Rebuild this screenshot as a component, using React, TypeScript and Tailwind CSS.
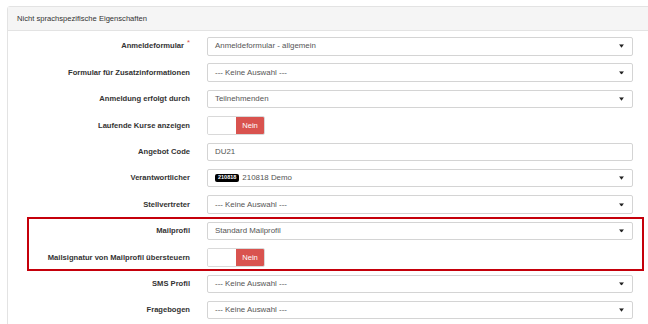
import React from "react";

const font = { fontFamily: '"Liberation Sans", Arial, sans-serif' };

function Arrow() {
  return (
    <svg width="5" height="3.5" viewBox="0 0 5 3.5" className="absolute right-[8px] top-1/2 -translate-y-1/2">
      <path d="M0 0 L5 0 L2.5 3.5 Z" fill="#222" />
    </svg>
  );
}

function Select({ children }: { children: React.ReactNode }) {
  return (
    <div className="relative flex h-full w-[426px] items-center rounded-[2px] border border-[#d4d4d4] bg-white pl-[7px] text-[7.9px] text-[#555]">
      {children}
      <Arrow />
    </div>
  );
}

function Input({ value }: { value: string }) {
  return (
    <div className="flex h-full w-[426px] items-center rounded-[2px] border border-[#d4d4d4] bg-white pl-[7px] text-[7.9px] text-[#555]">
      {value}
    </div>
  );
}

function Toggle() {
  return (
    <div className="flex h-full w-[58px] overflow-hidden rounded-[2px] border border-[#d9d9d9]">
      <div className="w-[28px] bg-white" />
      <div className="flex flex-1 items-center justify-center bg-[#d9534f] text-white">Nein</div>
    </div>
  );
}

function Row({ label, star, children }: { label: string; star?: boolean; children: React.ReactNode }) {
  return (
    <div className="flex h-[18.5px] items-center">
      <div className="w-[183px] pr-[1px] text-right font-bold text-[#333]">
        {label}
        {star && <span className="relative -top-[3px] ml-[3px] text-[#d9534f] font-normal">*</span>}
      </div>
      <div className="ml-[16px] h-full">{children}</div>
    </div>
  );
}

export default function App() {
  return (
    <div className="h-[324px] w-[648px] overflow-hidden bg-white pl-[7px] pt-[6px] text-[7.6px] leading-none" style={font}>
      <div className="w-[700px] rounded-tl-[3px] border border-[#e3e3e3]">
        <div className="flex h-[24px] items-center border-b border-[#e3e3e3] bg-[#f5f5f5] pl-[9px] text-[#333]">
          Nicht sprachspezifische Eigenschaften
        </div>
        <div className="flex flex-col gap-[7.9px] pt-[6px] pb-[20px]">
          <Row label="Anmeldeformular" star>
            <Select>Anmeldeformular - allgemein</Select>
          </Row>
          <Row label="Formular für Zusatzinformationen">
            <Select>--- Keine Auswahl ---</Select>
          </Row>
          <Row label="Anmeldung erfolgt durch">
            <Select>Teilnehmenden</Select>
          </Row>
          <Row label="Laufende Kurse anzeigen">
            <Toggle />
          </Row>
          <Row label="Angebot Code">
            <Input value="DU21" />
          </Row>
          <Row label="Verantwortlicher">
            <Select>
              <span className="mr-[3px] rounded-[2px] bg-black px-[3px] py-[1.5px] text-[5.5px] font-bold text-white">210818</span>
              210818 Demo
            </Select>
          </Row>
          <Row label="Stellvertreter">
            <Select>--- Keine Auswahl ---</Select>
          </Row>
          <div className="relative flex flex-col gap-[7.9px]">
            <div className="pointer-events-none absolute left-[19px] top-[-5px] h-[54px] w-[617px] border-[2.5px] border-[#c5000b]" />
            <Row label="Mailprofil">
              <Select>Standard Mailprofil</Select>
            </Row>
            <Row label="Mailsignatur von Mailprofil übersteuern">
              <Toggle />
            </Row>
          </div>
          <Row label="SMS Profil">
            <Select>--- Keine Auswahl ---</Select>
          </Row>
          <Row label="Fragebogen">
            <Select>--- Keine Auswahl ---</Select>
          </Row>
        </div>
      </div>
    </div>
  );
}
